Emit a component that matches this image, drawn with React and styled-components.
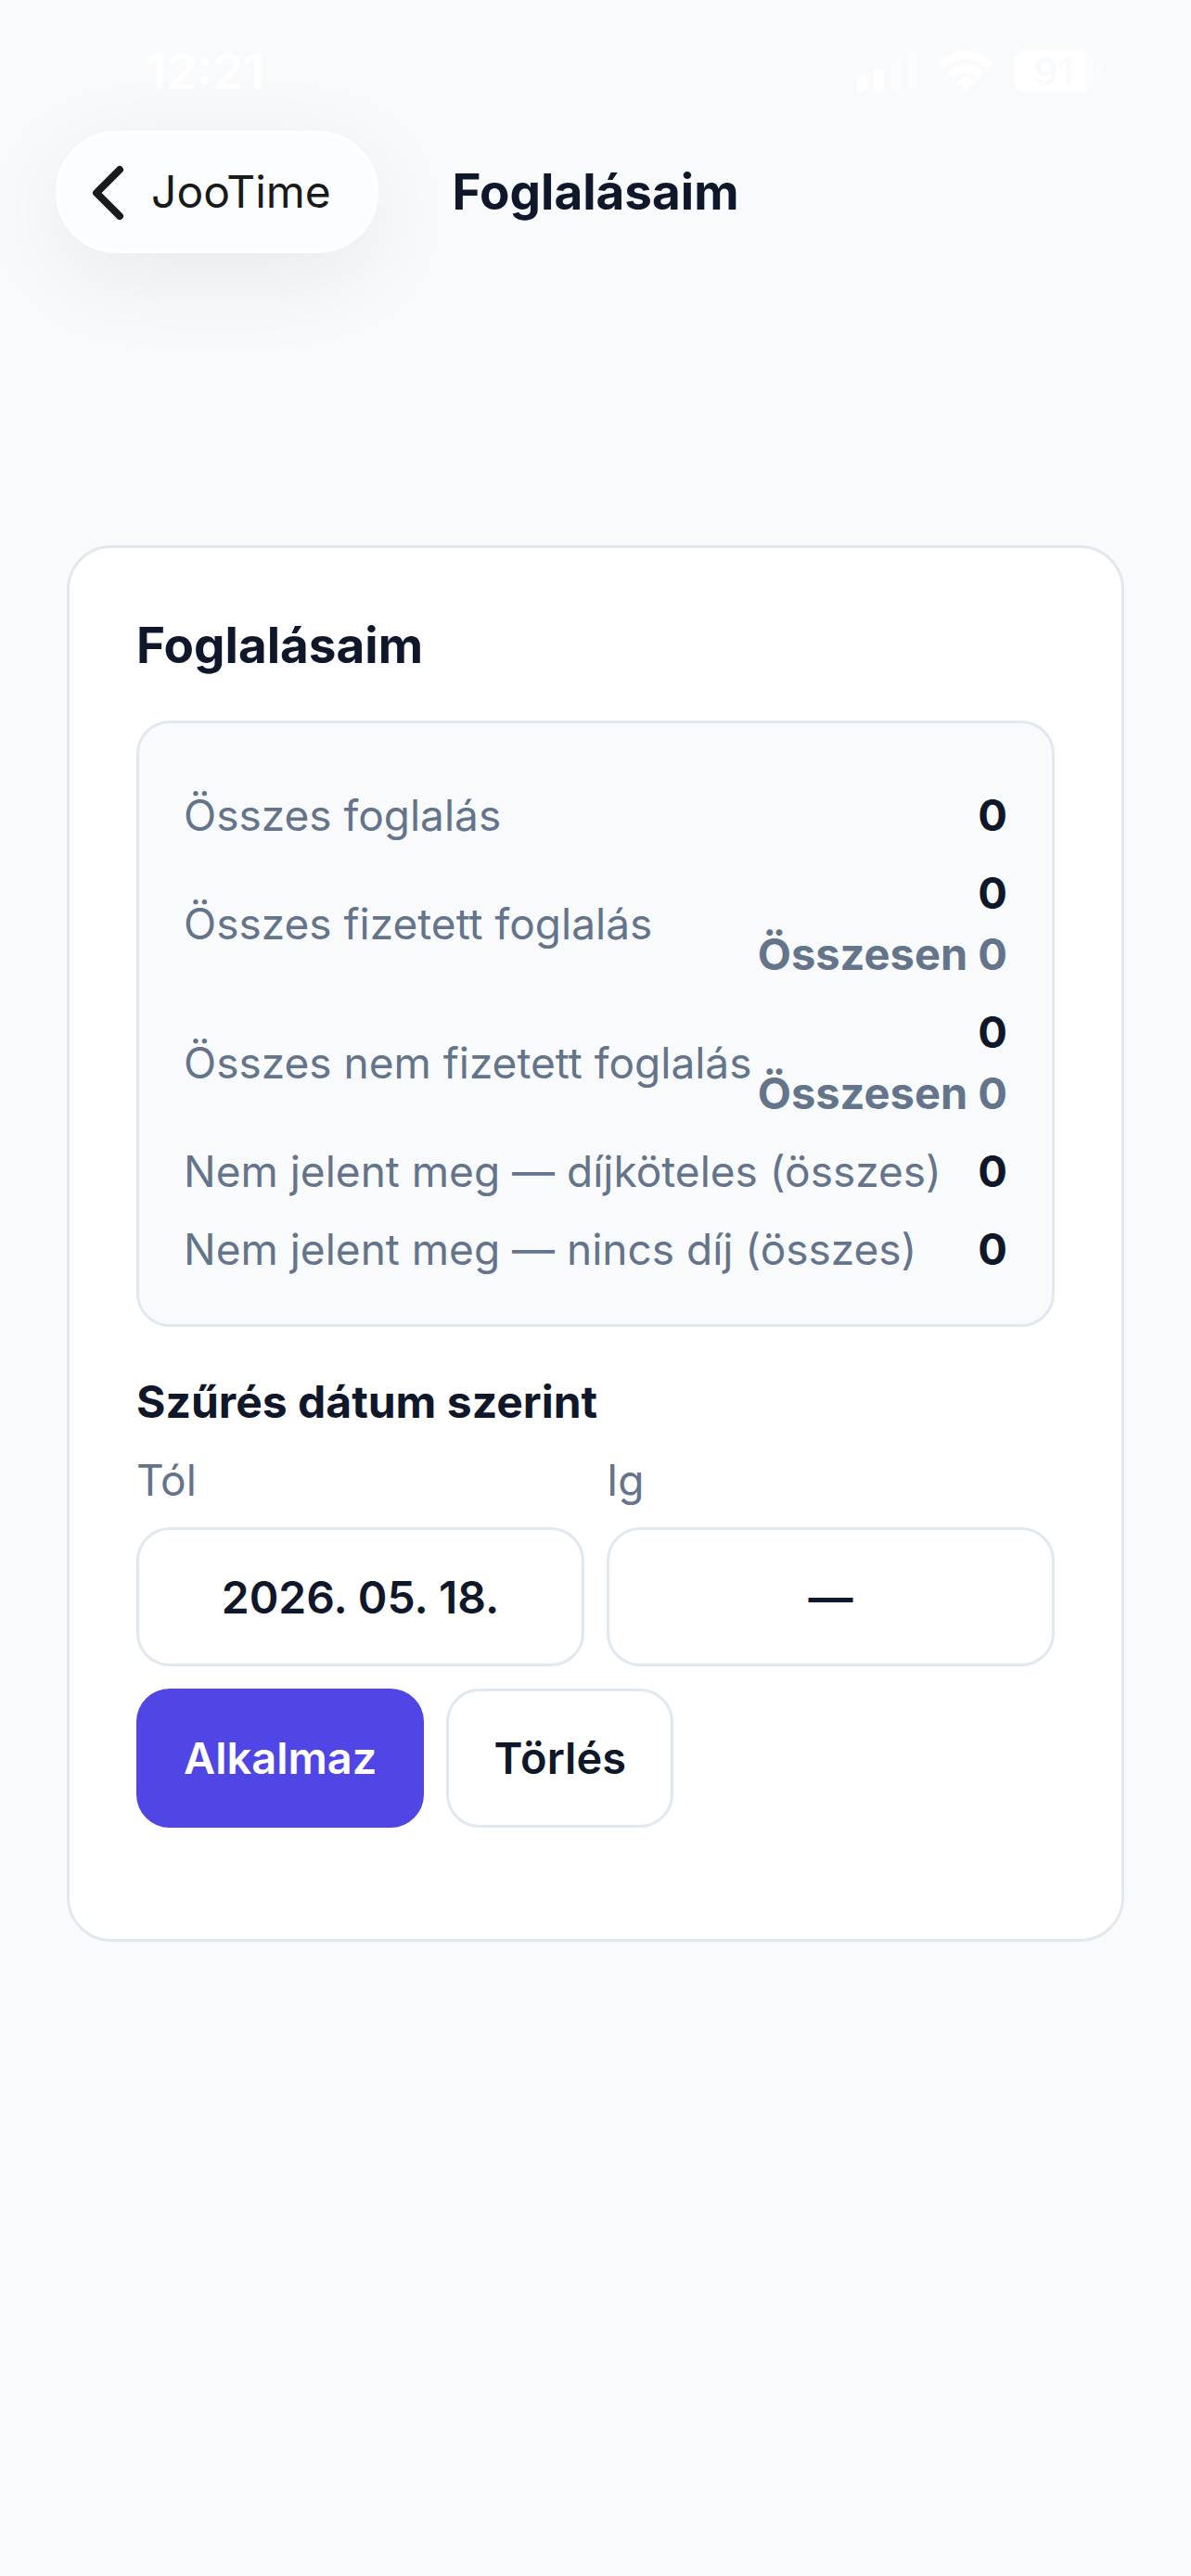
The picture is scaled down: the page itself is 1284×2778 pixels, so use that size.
import React, { useState } from "react";
import styled, { createGlobalStyle } from "styled-components";

const color = {
  page: "#f8fafc",
  surface: "#ffffff",
  border: "#e2e8f0",
  ink: "#0f172a",
  muted: "#64748b",
  primary: "#4f46e5",
};

const GlobalStyle = createGlobalStyle`
  *, *::before, *::after { box-sizing: border-box; }
  body {
    margin: 0;
    background: ${color.page};
    color: ${color.ink};
    font-family: Inter, "Liberation Sans", sans-serif;
    font-size: 46px;
    line-height: 66px;
  }
  h1, h2, h3, dl, dt, dd { margin: 0; }
  button, input { font: inherit; color: inherit; }
`;

const StatusBar = styled.div`
  display: flex;
  align-items: center;
  justify-content: space-between;
  height: 141px;
  padding: 12px 97px 0 157px;
  color: #ffffff;
`;

const Clock = styled.time`
  font-size: 53px;
  font-weight: 600;
`;

const StatusIcons = styled.div`
  display: flex;
  align-items: center;
  gap: 22px;
`;

const Battery = styled.div`
  display: flex;
  align-items: center;
  gap: 2px;
`;

const BatteryBody = styled.div`
  display: flex;
  align-items: center;
  justify-content: center;
  width: 86px;
  height: 45px;
  border-radius: 14px;
  background: linear-gradient(to right, #ffffff 90%, #fbfcfd 90%);
  color: ${color.page};
  font-size: 41px;
  font-weight: 600;
`;

const BatteryTip = styled.div`
  width: 6px;
  height: 16px;
  border-radius: 0 8px 8px 0;
  background: #fbfcfd;
`;

const NavBar = styled.header`
  display: grid;
  grid-template-columns: 1fr auto 1fr;
  align-items: center;
  padding: 0 60px;
`;

const BackButton = styled.button`
  justify-self: start;
  display: flex;
  align-items: center;
  gap: 28px;
  height: 132px;
  padding: 0 48px 0 36px;
  border: 3px solid #ffffff;
  border-radius: 66px;
  background: #fbfdfe;
  box-shadow: 0 24px 100px rgba(0, 0, 0, 0.07);
  color: #1a1a1a;
  font-size: 48px;
  cursor: pointer;
`;

const NavTitle = styled.h1`
  font-size: 53px;
  font-weight: 700;
`;

const Main = styled.main`
  padding: 315px 72px 72px;
`;

const Card = styled.section`
  padding: 72px 72px 120px;
  border: 3px solid ${color.border};
  border-radius: 48px;
  background: ${color.surface};
`;

const CardTitle = styled.h2`
  margin-bottom: 48px;
  font-size: 53px;
  font-weight: 700;
`;

const Summary = styled.dl`
  display: flex;
  flex-direction: column;
  gap: 18px;
  padding: 66px 48px 48px;
  border: 3px solid ${color.border};
  border-radius: 36px;
  background: ${color.page};
`;

const SummaryRow = styled.div`
  display: flex;
  align-items: center;
  justify-content: space-between;
`;

const SummaryLabel = styled.dt`
  color: ${color.muted};
  white-space: nowrap;
`;

const SummaryValue = styled.dd`
  display: flex;
  flex-direction: column;
  font-size: 47px;
  font-weight: 700;
  text-align: right;
  white-space: nowrap;
`;

const SubTotal = styled.span`
  color: ${color.muted};
`;

const Filter = styled.form`
  display: flex;
  flex-direction: column;
  margin-top: 48px;
`;

const FilterTitle = styled.h3`
  margin-bottom: 18px;
  font-size: 48px;
  font-weight: 700;
`;

const FieldRow = styled.div`
  display: grid;
  grid-template-columns: 1fr 1fr;
  gap: 24px;
  margin-bottom: 24px;
`;

const Field = styled.div`
  display: flex;
  flex-direction: column;
  gap: 18px;
`;

const FieldLabel = styled.label`
  color: ${color.muted};
`;

const DateInput = styled.input`
  width: 100%;
  height: 150px;
  padding: 0 48px;
  border: 3px solid ${color.border};
  border-radius: 36px;
  background: ${color.surface};
  font-size: 48px;
  font-weight: 600;
  text-align: center;
`;

const Actions = styled.div`
  display: flex;
  gap: 24px;
`;

const ActionButton = styled.button`
  height: 150px;
  padding: 0 48px;
  border: 3px solid ${(p) => (p.$primary ? color.primary : color.border)};
  border-radius: 36px;
  background: ${(p) => (p.$primary ? color.primary : color.surface)};
  color: ${(p) => (p.$primary ? "#ffffff" : color.ink)};
  font-size: 47px;
  font-weight: 600;
  cursor: pointer;
`;

function SignalIcon() {
  return (
    <svg width="65" height="42" viewBox="0 0 65 42" fill="#ffffff" aria-hidden="true">
      <rect x="0" y="26" width="11" height="16" rx="3" />
      <rect x="18" y="19" width="11" height="23" rx="3" />
      <rect x="36" y="10" width="11" height="32" rx="3" opacity="0.35" />
      <rect x="54" y="0" width="11" height="42" rx="3" opacity="0.35" />
    </svg>
  );
}

function WifiIcon() {
  return (
    <svg width="60" height="44" viewBox="0 0 60 44" fill="#ffffff" stroke="#ffffff" strokeLinejoin="round" aria-hidden="true">
      <path d="M1 12.7A40.6 40.6 0 0 1 59 12.7L54 18.7A33.8 33.8 0 0 0 6 18.7Z" />
      <path d="M11 23.3A25.3 25.3 0 0 1 49 23.3L44 28.7A20.8 20.8 0 0 0 16 28.7Z" />
      <path d="M20.5 33.3A12 12 0 0 1 39.5 33.3L30 43Z" />
    </svg>
  );
}

function ChevronIcon() {
  return (
    <svg width="36" height="60" viewBox="0 0 36 60" fill="none" stroke="currentColor" strokeWidth="8" strokeLinecap="round" strokeLinejoin="round" aria-hidden="true">
      <path d="M30 6L5 31L30 56" />
    </svg>
  );
}

const rows = [
  { label: "Összes foglalás", value: 0 },
  { label: "Összes fizetett foglalás", value: 0, total: 0 },
  { label: "Összes nem fizetett foglalás", value: 0, total: 0 },
  { label: "Nem jelent meg — díjköteles (összes)", value: 0 },
  { label: "Nem jelent meg — nincs díj (összes)", value: 0 },
];

export default function App() {
  const [from, setFrom] = useState("2026. 05. 18.");
  const [to, setTo] = useState("—");

  const clear = () => {
    setFrom("—");
    setTo("—");
  };

  return (
    <>
      <GlobalStyle />
      <StatusBar>
        <Clock>12:21</Clock>
        <StatusIcons>
          <SignalIcon />
          <WifiIcon />
          <Battery>
            <BatteryBody>91</BatteryBody>
            <BatteryTip />
          </Battery>
        </StatusIcons>
      </StatusBar>
      <NavBar>
        <BackButton type="button">
          <ChevronIcon />
          JooTime
        </BackButton>
        <NavTitle>Foglalásaim</NavTitle>
      </NavBar>
      <Main>
        <Card>
          <CardTitle>Foglalásaim</CardTitle>
          <Summary>
            {rows.map((row) => (
              <SummaryRow key={row.label}>
                <SummaryLabel>{row.label}</SummaryLabel>
                <SummaryValue>
                  <span>{row.value}</span>
                  {row.total !== undefined && <SubTotal>Összesen {row.total}</SubTotal>}
                </SummaryValue>
              </SummaryRow>
            ))}
          </Summary>
          <Filter onSubmit={(e) => e.preventDefault()}>
            <FilterTitle>Szűrés dátum szerint</FilterTitle>
            <FieldRow>
              <Field>
                <FieldLabel htmlFor="from">Tól</FieldLabel>
                <DateInput id="from" type="text" value={from} onChange={(e) => setFrom(e.target.value)} />
              </Field>
              <Field>
                <FieldLabel htmlFor="to">Ig</FieldLabel>
                <DateInput id="to" type="text" value={to} onChange={(e) => setTo(e.target.value)} />
              </Field>
            </FieldRow>
            <Actions>
              <ActionButton type="submit" $primary>Alkalmaz</ActionButton>
              <ActionButton type="button" onClick={clear}>Törlés</ActionButton>
            </Actions>
          </Filter>
        </Card>
      </Main>
    </>
  );
}
